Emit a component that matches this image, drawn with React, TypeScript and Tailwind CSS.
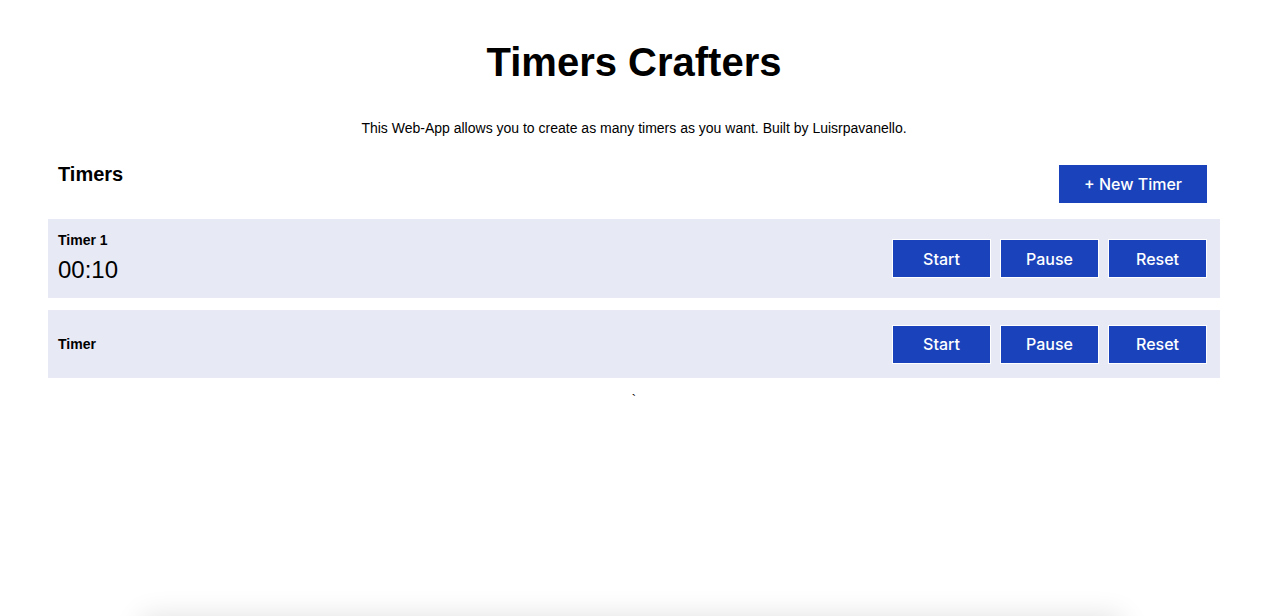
import React from 'react'

interface Timer {
  name: string
  time?: string
}

const timers: Timer[] = [
  { name: 'Timer 1', time: '00:10' },
  { name: 'Timer' },
]

function ActionButton({ label }: { label: string }) {
  return (
    <button className="w-[99px] h-[39px] bg-[#1a43bb] border border-white text-white text-[16px] font-['Inter',sans-serif] font-medium">
      {label}
    </button>
  )
}

export default function App() {
  return (
    <div className="h-[616px] overflow-hidden bg-white font-['Liberation_Sans',Arial,sans-serif] text-black">
      <div className="min-h-[616px] pl-[48px] pr-[44px] pt-[37px]">
        <h1 className="text-center text-[40px] font-bold leading-[50px]">Timers Crafters</h1>
        <p className="text-center text-[14px] mt-[33px] leading-[17px]">
          This Web-App allows you to create as many timers as you want. Built by Luisrpavanello.
        </p>

        <div className="flex items-start justify-between mt-[28px] pl-[10px] pr-[13px]">
          <h2 className="text-[20px] font-bold leading-[24px] mt-[-3px]">Timers</h2>
          <button className="w-[148px] h-[38px] bg-[#1a43bb] text-white text-[16px] font-['Inter',sans-serif] font-medium">
            + New Timer
          </button>
        </div>

        <div className="flex flex-col gap-[12px] mt-[16px]">
          {timers.map((timer) => (
            <div
              key={timer.name}
              className={`flex items-center justify-between bg-[#e7e9f5] pl-[10px] pr-[13px] ${
                timer.time ? 'h-[79px]' : 'h-[68px]'
              }`}
            >
              <div>
                <div className="text-[14px] font-bold leading-[17px]">{timer.name}</div>
                {timer.time && <div className="text-[24px] leading-[30px] mt-[6px]">{timer.time}</div>}
              </div>
              <div className="flex gap-[9px]">
                <ActionButton label="Start" />
                <ActionButton label="Pause" />
                <ActionButton label="Reset" />
              </div>
            </div>
          ))}
        </div>

        <div className="text-center text-[13px] leading-[16px] mt-[14px]">`</div>
      </div>
      <div className="w-[980px] h-[60px] mx-auto bg-white shadow-[0_0_28px_rgba(0,0,0,0.12)]"></div>
    </div>
  )
}
